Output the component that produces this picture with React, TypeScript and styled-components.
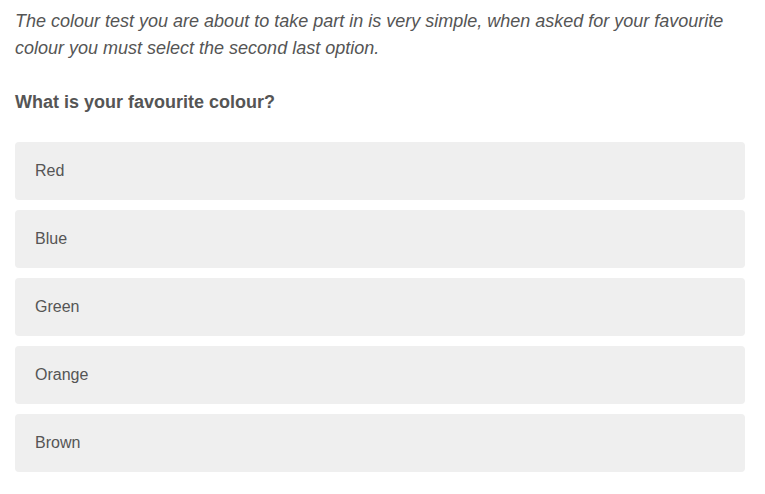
import React from "react";
import styled, { createGlobalStyle } from "styled-components";

const Global = createGlobalStyle`
  html, body { margin: 0; padding: 0; background: #fff; }
  body { font-family: "Liberation Sans", Arial, sans-serif; color: #555; }
`;

const Page = styled.div`
  padding: 8px 15px 0 15px;
  width: 730px;
`;

const Intro = styled.p`
  margin: 0;
  font-style: italic;
  font-size: 18px;
  line-height: 27px;
  color: #555;
`;

const Question = styled.h2`
  margin: 27px 0 0 0;
  font-size: 18px;
  line-height: 27px;
  font-weight: bold;
  color: #555;
`;

const Options = styled.div`
  margin-top: 26px;
  display: flex;
  flex-direction: column;
  gap: 10px;
`;

const Option = styled.div`
  height: 58px;
  box-sizing: border-box;
  display: flex;
  align-items: center;
  padding: 0 20px;
  background: #efefef;
  border-radius: 4px;
  font-size: 16px;
  color: #555;
`;

const colours = ["Red", "Blue", "Green", "Orange", "Brown"];

export default function App() {
  return (
    <>
      <Global />
      <Page>
        <Intro>
          The colour test you are about to take part in is very simple, when asked for your favourite
          colour you must select the second last option.
        </Intro>
        <Question>What is your favourite colour?</Question>
        <Options>
          {colours.map((c) => (
            <Option key={c}>{c}</Option>
          ))}
        </Options>
      </Page>
    </>
  );
}
